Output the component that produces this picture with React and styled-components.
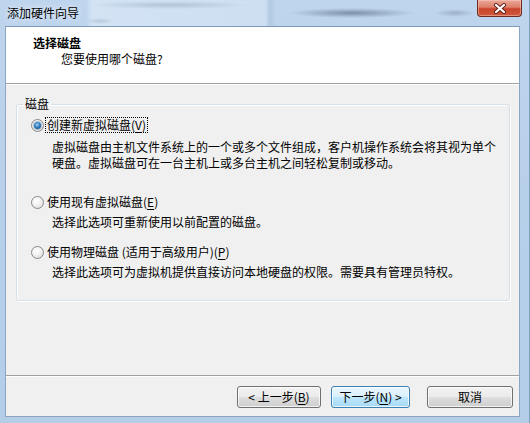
import React from "react";
import styled, { createGlobalStyle } from "styled-components";

const GlobalStyle = createGlobalStyle`
  html, body {
    margin: 0;
    padding: 0;
    background: #b9d1ea;
  }
  body {
    font-family: "Noto Sans CJK SC", "Noto Sans", sans-serif;
    font-size: 12px;
    color: #000;
  }
`;

const Frame = styled.div`
  width: 530px;
  height: 423px;
  display: flex;
  flex-direction: column;
  box-sizing: border-box;
  background: linear-gradient(180deg, #bfd5ee 0%, #b8d0ea 40%, #b4cde9 100%);
  border-right: 1px solid #7e9dbf;
`;

const TitleBar = styled.div`
  height: 26px;
  display: flex;
  align-items: flex-start;
  padding-left: 7px;
  background:
    radial-gradient(ellipse 62px 5px at 352px 13px, rgba(70, 88, 112, 0.55), transparent),
    radial-gradient(ellipse 20px 4px at 455px 13px, rgba(90, 108, 130, 0.35), transparent),
    radial-gradient(ellipse 80px 4px at 170px 5px, rgba(120, 140, 165, 0.35), transparent),
    radial-gradient(ellipse 14px 3px at 100px 21px, rgba(120, 140, 165, 0.3), transparent),
    linear-gradient(90deg, transparent 86px, rgba(230, 240, 250, 0.5) 92px, rgba(225, 236, 248, 0.45) 265px, rgba(160, 185, 210, 0.4) 270px, transparent 276px);
`;

const TitleText = styled.span`
  margin-top: 5px;
  line-height: 16px;
  color: #000;
  text-shadow: 0 0 6px rgba(255, 255, 255, 0.9);
`;

const CloseButton = styled.div`
  margin-left: auto;
  margin-right: 7px;
  width: 45px;
  height: 17px;
  box-sizing: border-box;
  border: 1px solid #6d2b21;
  border-top: none;
  border-radius: 0 0 4px 4px;
  background: linear-gradient(180deg, #eaa899 0%, #dd7e69 45%, #c9442c 55%, #cf5a3c 100%);
  box-shadow: inset 0 0 0 1px rgba(255, 210, 200, 0.45);
  display: flex;
  align-items: center;
  justify-content: center;
`;

const Client = styled.div`
  flex: 1;
  margin: 0 9px 6px 5px;
  display: flex;
  flex-direction: column;
  background: #f0f0f0;
  border: 1px solid #8ca6c2;
  border-top-color: #7f9bba;
`;

const Header = styled.div`
  background: #fff;
  border-bottom: 1px solid #a0a0a0;
  padding: 8px 0 0 27px;
  height: 48px;
`;

const HeaderTitle = styled.div`
  font-weight: bold;
  line-height: 16px;
`;

const HeaderSub = styled.div`
  line-height: 16px;
  padding-left: 28px;
`;

const Body = styled.div`
  flex: 1;
  border-top: 1px solid #fff;
  display: flex;
  flex-direction: column;
`;

const Group = styled.fieldset`
  margin: 12px 9px 0 10px;
  padding: 6px 6px 20px 6px;
  border: 1px solid #d5dfe5;
  border-radius: 3px;
  box-shadow: 1px 1px 0 #fff, inset 1px 1px 0 #fff;
  min-width: 0;
`;

const Legend = styled.legend`
  padding: 0 2px;
  line-height: 14px;
`;

const Option = styled.div`
  margin-top: ${(p) => p.$top}px;
`;

const OptionRow = styled.div`
  display: flex;
  align-items: center;
  height: 16px;
  padding-left: 8px;
`;

const Radio = styled.span`
  width: 13px;
  height: 13px;
  box-sizing: border-box;
  border-radius: 50%;
  border: 1px solid #8a8a8a;
  background: radial-gradient(circle at 40% 35%, #ffffff 0%, #f3f3f3 40%, #d4d4d4 100%);
  display: flex;
  align-items: center;
  justify-content: center;
  flex-shrink: 0;
`;

const RadioDot = styled.span`
  width: 7px;
  height: 7px;
  border-radius: 50%;
  background: radial-gradient(circle at 45% 40%, #a9d6f7 0%, #2f7cc0 45%, #123f6a 100%);
  box-shadow: 0 0 0 1px rgba(40, 90, 140, 0.35);
`;

const OptionLabel = styled.span`
  margin-left: ${(p) => (p.$focused ? 2 : 3)}px;
  line-height: 14px;
  padding: 0 ${(p) => (p.$focused ? 1 : 0)}px;
  outline: ${(p) => (p.$focused ? "1px dotted #000" : "none")};
`;

const Desc = styled.div`
  margin-top: ${(p) => p.$top}px;
  padding-left: 29px;
  line-height: 16px;
  white-space: nowrap;
`;

const Key = styled.u`
  text-underline-offset: 2px;
`;

const Footer = styled.div`
  height: 41px;
  border-top: 1px solid #a0a0a0;
  box-shadow: inset 0 1px 0 #fff;
  display: flex;
  align-items: flex-start;
  justify-content: flex-end;
  padding: 10px 6px 0 0;
  box-sizing: border-box;
`;

const Button = styled.div`
  width: ${(p) => p.$width}px;
  height: 22px;
  margin-left: ${(p) => p.$gap}px;
  box-sizing: border-box;
  border: 1px solid ${(p) => (p.$hot ? "#3c7fb1" : "#707070")};
  border-radius: 3px;
  background: ${(p) =>
    p.$hot
      ? "linear-gradient(180deg, #eaf6fd 0%, #d9f0fc 48%, #bee6fd 52%, #a7d9f5 100%)"
      : "linear-gradient(180deg, #f2f2f2 0%, #ebebeb 48%, #dddddd 52%, #cfcfcf 100%)"};
  box-shadow: inset 0 0 0 1px rgba(255, 255, 255, 0.75);
  display: flex;
  align-items: center;
  justify-content: center;
  line-height: 14px;
  white-space: nowrap;
`;

const CloseGlyph = () => (
  <svg width="14" height="11" viewBox="0 0 14 11">
    <path d="M3 2 L11 9 M11 2 L3 9" stroke="#5a1f16" strokeWidth="4" strokeLinecap="round" />
    <path d="M3 2 L11 9 M11 2 L3 9" stroke="#fff" strokeWidth="2.2" strokeLinecap="round" />
  </svg>
);

const options = [
  {
    top: 0,
    descTop: 6,
    checked: true,
    label: (
      <>
        创建新虚拟磁盘(<Key>V</Key>)
      </>
    ),
    lines: [
      "虚拟磁盘由主机文件系统上的一个或多个文件组成，客户机操作系统会将其视为单个",
      "硬盘。虚拟磁盘可在一台主机上或多台主机之间轻松复制或移动。",
    ],
  },
  {
    top: 23,
    descTop: 4,
    label: (
      <>
        使用现有虚拟磁盘(<Key>E</Key>)
      </>
    ),
    lines: ["选择此选项可重新使用以前配置的磁盘。"],
  },
  {
    top: 14,
    descTop: 4,
    label: (
      <>
        使用物理磁盘 (适用于高级用户)(<Key>P</Key>)
      </>
    ),
    lines: ["选择此选项可为虚拟机提供直接访问本地硬盘的权限。需要具有管理员特权。"],
  },
];

export default function App() {
  return (
    <>
      <GlobalStyle />
      <Frame>
        <TitleBar>
          <TitleText>添加硬件向导</TitleText>
          <CloseButton>
            <CloseGlyph />
          </CloseButton>
        </TitleBar>
        <Client>
          <Header>
            <HeaderTitle>选择磁盘</HeaderTitle>
            <HeaderSub>您要使用哪个磁盘?</HeaderSub>
          </Header>
          <Body>
            <Group>
              <Legend>磁盘</Legend>
              {options.map((o, i) => (
                <Option key={i} $top={o.top}>
                  <OptionRow>
                    <Radio>{o.checked && <RadioDot />}</Radio>
                    <OptionLabel $focused={o.checked}>{o.label}</OptionLabel>
                  </OptionRow>
                  <Desc $top={o.descTop}>
                    {o.lines.map((l, j) => (
                      <div key={j}>{l}</div>
                    ))}
                  </Desc>
                </Option>
              ))}
            </Group>
          </Body>
          <Footer>
            <Button $width={84} $gap={0}>
              &lt; 上一步(<Key>B</Key>)
            </Button>
            <Button $width={79} $gap={10} $hot>
              下一步(<Key>N</Key>) &gt;
            </Button>
            <Button $width={86} $gap={17}>
              取消
            </Button>
          </Footer>
        </Client>
      </Frame>
    </>
  );
}
